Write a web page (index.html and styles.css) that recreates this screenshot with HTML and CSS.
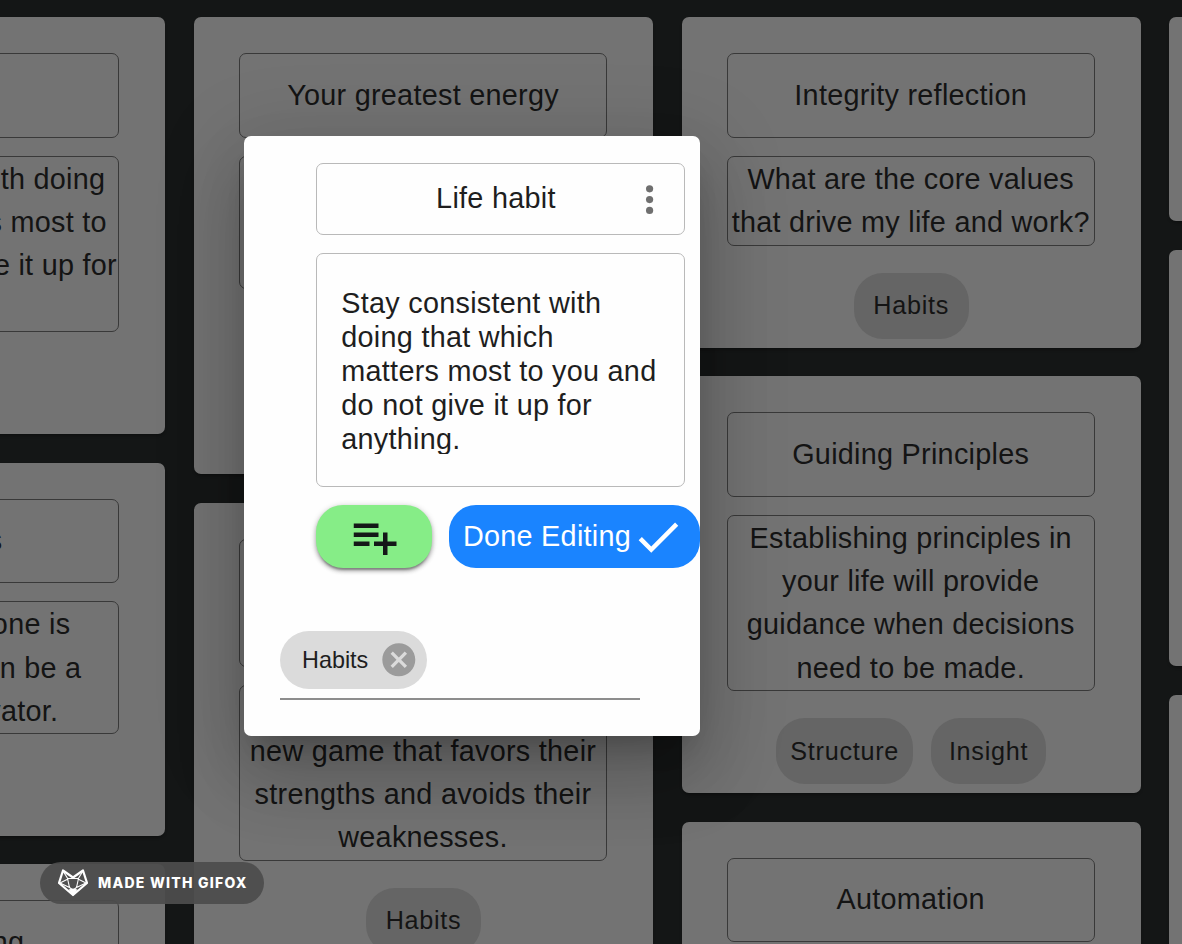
FILE: index.html
```html
<!DOCTYPE html>
<html lang="en">
<head>
<meta charset="utf-8">
<title>Life habit</title>
<link rel="stylesheet" href="styles.css">
</head>
<body>
<main class="board">
  <section class="column">
    <article class="card">
      <h2 class="card-title"></h2>
      <p class="card-body">Stay consistent with doing<br>that which matters most to<br>you and do not give it up for<br>anything.</p>
      <div class="tags tags-empty"></div>
    </article>
    <article class="card card-medium">
      <h2 class="card-title cut cut-title">s</h2>
      <p class="card-body rows-3 cut"><span class="line line-a">one is</span><span class="line line-b">n be a</span><span class="line line-c">vator.</span></p>
      <div class="tags tags-empty"></div>
    </article>
    <article class="card">
      <h2 class="card-title cut cut-last">ng</h2>
      <p class="card-body"></p>
    </article>
  </section>
  <section class="column">
    <article class="card">
      <h2 class="card-title">Your greatest energy</h2>
      <p class="card-body rows-3"></p>
      <div class="tags tags-double"></div>
    </article>
    <article class="card">
      <h2 class="card-title title-2"></h2>
      <p class="card-body"><br>new game that favors their<br>strengths and avoids their<br>weaknesses.</p>
      <div class="tags"><span class="tag">Habits</span></div>
    </article>
  </section>
  <section class="column">
    <article class="card">
      <h2 class="card-title">Integrity reflection</h2>
      <p class="card-body">What are the core values<br>that drive my life and work?</p>
      <div class="tags"><span class="tag">Habits</span></div>
    </article>
    <article class="card">
      <h2 class="card-title">Guiding Principles</h2>
      <p class="card-body">Establishing principles in<br>your life will provide<br>guidance when decisions<br>need to be made.</p>
      <div class="tags"><span class="tag">Structure</span><span class="tag">Insight</span></div>
    </article>
    <article class="card">
      <h2 class="card-title">Automation</h2>
      <p class="card-body"></p>
    </article>
  </section>
  <section class="column">
    <article class="card card-short"></article>
    <article class="card card-tall"></article>
    <article class="card card-tall"></article>
  </section>
</main>

<div class="dialog" role="dialog">
  <div class="dialog-main">
    <div class="field title-field">
      <span class="title-text">Life habit</span>
      <svg class="icon-more" viewBox="0 0 24 24"><circle cx="12" cy="6" r="2"/><circle cx="12" cy="12" r="2"/><circle cx="12" cy="18" r="2"/></svg>
    </div>
    <div class="field text-field"><div class="text-area">Stay consistent with<br>doing that which<br>matters most to you and<br>do not give it up for<br>anything.</div></div>
    <div class="actions">
      <button class="btn btn-add" aria-label="Add to list"><svg class="icon-lg" viewBox="0 0 24 24"><path d="M14 10H3v2h11v-2zm0-4H3v2h11V6zm4 8v-4h-2v4h-4v2h4v4h2v-4h4v-2h-4zM3 16h7v-2H3v2z"/></svg></button>
      <button class="btn btn-done"><span>Done Editing</span><svg class="icon-lg" viewBox="0 0 24 24"><path d="M9 16.17L4.83 12l-1.42 1.41L9 19 21 7l-1.41-1.41z"/></svg></button>
    </div>
  </div>
  <div class="tag-input">
    <span class="chip"><span class="chip-label">Habits</span><svg class="icon-cancel" viewBox="0 0 24 24"><path d="M12 2C6.47 2 2 6.47 2 12s4.47 10 10 10 10-4.47 10-10S17.53 2 12 2zm5 13.59L15.59 17 12 13.41 8.41 17 7 15.59 10.59 12 7 8.41 8.41 7 12 10.59 15.59 7 17 8.41 13.41 12 17 15.59z"/></svg></span>
  </div>
</div>

<div class="badge">
  <svg class="fox" viewBox="0 0 30 28"><path d="M5 1.500L15 8.500L25 1.500L29 14L15 26L1 14Z"/><path class="thin" d="M5 2L10 10L2 14L11.500 18.500L9.500 9.500H20.500L18.500 18.500L28 14L20 10L25 2M11.500 18.500L15 21L18.500 18.500"/><path class="nose" d="M10.500 20.500L15 19.500L19.500 20.500L15 27Z"/></svg>
  <span class="badge-text">MADE WITH GIFOX</span>
</div>
</body>
</html>
```
FILE: styles.css
```css
* { box-sizing: border-box; }

body {
  margin: 0;
  height: 944px;
  overflow: hidden;
  background: #141616;
  color: #141414;
  font: 28.8px/43.2px "Liberation Sans", Arial, sans-serif;
  letter-spacing: 0.27px;
}

.board {
  display: grid;
  grid-template-columns: repeat(4, 459px);
  column-gap: 28.7px;
  align-items: start;
  height: 944px;
  margin-left: -293.7px;
  padding-top: 17px;
  overflow: hidden;
}

.column { display: flex; flex-direction: column; gap: 28.6px; }

.card {
  display: flex;
  flex-direction: column;
  padding: 36px 46px 9px 45px;
  border-radius: 7px;
  background: #737373;
  box-shadow: 0 3px 2px -2px rgba(0,0,0,.2), 0 2px 3px rgba(0,0,0,.14);
}

.card-short { height: 204px; }
.card-medium { height: 373.2px; }
.card-tall { height: 416.4px; }

.card-title, .card-body {
  margin: 0;
  border: 1px solid #393939;
  border-radius: 7px;
  font: inherit;
  text-align: center;
  white-space: nowrap;
}

.card-title { height: 84.6px; padding: 19.6px 0 0; margin-bottom: 18px; }
.title-2 { height: 128px; }
.card-body { min-height: 90px; padding: 1.3px 0 0.3px; }
.rows-3 { height: 133px; }

.cut { text-align: right; }
.cut-title { padding-right: 116px; }
.cut-last { padding-right: 94px; }
.line { display: block; }
.line-a { padding-right: 48px; }
.line-b { padding-right: 37px; }
.line-c { padding-right: 60px; }

.tags {
  display: flex;
  justify-content: center;
  gap: 18px;
  margin-top: 27px;
  padding-left: 1px;
  height: 66px;
}
.tags-double { height: 149.4px; }

.tag {
  display: flex;
  align-items: center;
  justify-content: center;
  min-width: 115px;
  padding: 0 14px;
  border-radius: 29px;
  background: #656565;
  font-size: 25.2px;
  letter-spacing: 0.72px;
}

.dialog {
  position: absolute;
  left: 244px;
  top: 136px;
  width: 456px;
  height: 600px;
  padding: 27px 0 36px;
  border-radius: 7px;
  background: #fefefe;
  color: #1e1e1e;
  box-shadow: 0 20px 27px -13px rgba(0,0,0,.2), 0 43px 68px 5px rgba(0,0,0,.14), 0 16px 83px 14px rgba(0,0,0,.12);
}

.dialog-main { margin-left: 72px; }

.field {
  width: 369px;
  border: 1px solid #b9b9b9;
  border-radius: 7px;
}

.title-field {
  display: flex;
  align-items: center;
  height: 72px;
  padding: 0 13px 0 61px;
}
.title-text { flex: 1; padding-right: 14px; text-align: center; }
.icon-more { width: 43.2px; height: 43.2px; margin-top: 1px; fill: #6f6f6f; }

.text-field { height: 234px; margin-top: 18px; padding: 32px 0 0 24.3px; }
.text-area { height: 168px; overflow: hidden; line-height: 34px; white-space: nowrap; }

.actions { display: flex; gap: 17px; margin-top: 18px; }

.btn {
  display: flex;
  align-items: center;
  justify-content: center;
  height: 63px;
  padding: 0;
  border: 0;
  border-radius: 27px;
  font: inherit;
  letter-spacing: inherit;
}
.btn-add {
  width: 116px;
  background: #86ed87;
  box-shadow: 0 4px 2px -2px rgba(0,0,0,.25), 0 3px 4px rgba(0,0,0,.25), 0 1px 6px rgba(0,0,0,.2);
}
.btn-done { width: 251px; background: #1a84ff; color: #fff; padding-right: 1px; }
.icon-lg { width: 54px; height: 54px; fill: #141818; }
.btn-done .icon-lg { fill: #fff; }

.tag-input {
  width: 360px;
  height: 69px;
  margin: 63px 0 0 36px;
  border-bottom: 2px solid #8d8d8d;
}

.chip {
  display: inline-flex;
  align-items: center;
  width: 147px;
  height: 58px;
  padding-left: 22px;
  border-radius: 29px;
  background: #dbdbdb;
  font-size: 23.4px;
  letter-spacing: 0;
}
.chip-label { padding-top: 2px; }
.icon-cancel { width: 39.6px; height: 39.6px; margin-left: 10.5px; fill: #9b9b9b; }

.badge {
  position: absolute;
  left: 40px;
  top: 862px;
  display: flex;
  align-items: center;
  width: 224px;
  height: 42px;
  padding-left: 18px;
  border-radius: 21px;
  background: rgba(76,76,76,.94);
  color: #fff;
}
.fox { width: 30px; height: 28px; margin-right: 10px; fill: none; stroke: #fff; stroke-width: 2.2; stroke-linejoin: round; }
.fox .thin { stroke-width: 1.1; }
.fox .nose { fill: #fff; stroke: none; }
.badge-text { font: 800 14px/20px Inter, "Open Sans", sans-serif; letter-spacing: 1.25px; white-space: nowrap; }
```
